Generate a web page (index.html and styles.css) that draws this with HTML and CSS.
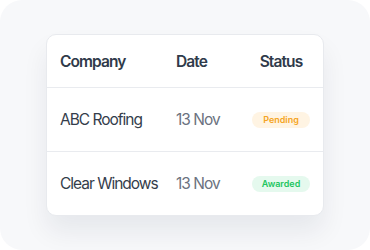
FILE: index.html
```html
<!DOCTYPE html>
<html>
<head>
<meta charset="utf-8">
<link rel="stylesheet" href="styles.css">
</head>
<body>
<div class="stage">
  <div class="card">
    <div class="row head">
      <div>Company</div>
      <div>Date</div>
      <div class="center">Status</div>
    </div>
    <div class="row">
      <div class="company">ABC Roofing</div>
      <div class="date">13 Nov</div>
      <div class="center"><span class="badge pending">Pending</span></div>
    </div>
    <div class="row last">
      <div class="company">Clear Windows</div>
      <div class="date">13 Nov</div>
      <div class="center"><span class="badge awarded">Awarded</span></div>
    </div>
  </div>
</div>
</body>
</html>
```
FILE: styles.css
```css
html, body {
  margin: 0;
  padding: 0;
  background: #ffffff;
}
body {
  font-family: Inter, "Noto Sans", sans-serif;
}
.stage {
  width: 370px;
  height: 250px;
  box-sizing: border-box;
  background: #f7f8fa;
  border-radius: 22px;
  padding-top: 34px;
  display: flex;
  justify-content: center;
  align-items: flex-start;
}
.card {
  width: 278px;
  box-sizing: border-box;
  background: #ffffff;
  border: 1px solid #e8eaee;
  border-radius: 10px;
  box-shadow: 0 16px 26px rgba(20, 30, 50, 0.07);
}
.row {
  display: grid;
  grid-template-columns: 116px 76px 58px;
  padding: 0 13px;
  height: 63px;
  align-items: center;
  border-bottom: 1px solid #e9ebef;
  letter-spacing: -1px;
}
.row.head {
  height: 52px;
  font-weight: 600;
  font-size: 15.5px;
  color: #2f3a4a;
  letter-spacing: -0.9px;
}
.row.last {
  border-bottom: none;
}
.center {
  display: flex;
  justify-content: center;
}
.company {
  font-size: 15.5px;
  color: #343d4b;
}
.date {
  font-size: 15.5px;
  color: #6b7280;
}
.badge {
  display: inline-flex;
  align-items: center;
  justify-content: center;
  width: 58px;
  height: 16px;
  border-radius: 8px;
  font-size: 9px;
  font-weight: 600;
  letter-spacing: 0;
}
.pending {
  background: #fff4e3;
  color: #f5a524;
}
.awarded {
  background: #e5f9ee;
  color: #22c55e;
}
```
